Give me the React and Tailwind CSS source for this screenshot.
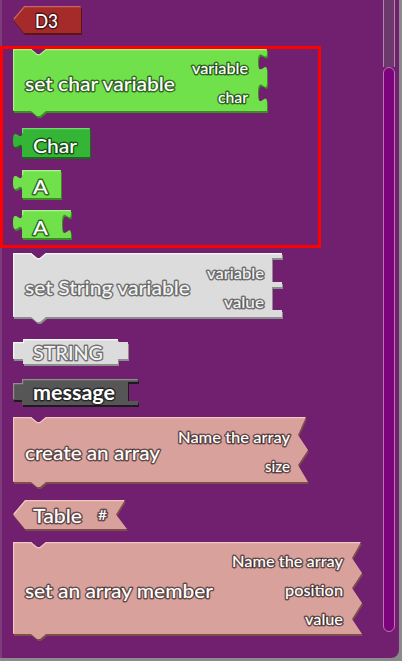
import React from 'react';

const FONT = "Lato, 'Open Sans', sans-serif";

const COLORS = {
  red: { fill: '#a52b2b', dark: '#5c1414', light: '#c86565' },
  green: { fill: '#70e14b', dark: '#3d8a27', light: '#a9f28f' },
  char: { fill: '#35b535', dark: '#1b691b', light: '#72d872' },
  gray: { fill: '#dcdcdc', dark: '#8c8c8c', light: '#f6f6f6' },
  dark: { fill: '#565656', dark: '#1c1c1c', light: '#8e8e8e' },
  pink: { fill: '#d9a19c', dark: '#7c4d49', light: '#f0c8c4' },
};

function Block({ w, h, d, hl, color, className = '', children }) {
  const c = COLORS[color];
  return (
    <svg width={w} height={h} className={`block overflow-visible ${className}`}>
      <path d={d} fill={c.dark} transform="translate(1,2)" />
      <path d={d} fill={c.fill} />
      {hl && <path d={hl} fill="none" stroke={c.light} strokeWidth="1.2" />}
      {children}
    </svg>
  );
}

function Label({ x, y, len, size = 20, end, gray, bold, children }) {
  return (
    <text
      x={x}
      y={y}
      fontSize={size}
      fontFamily={FONT}
      fontWeight={bold ? 700 : 500}
      textAnchor={end ? 'end' : 'start'}
      textLength={len}
      lengthAdjust="spacingAndGlyphs"
      fill={gray ? '#f4f4f4' : '#ffffff'}
      stroke={gray ? '#4e4e4e' : '#000000'}
      strokeOpacity={gray ? 0.75 : 0.55}
      strokeWidth="2.8"
      strokeLinejoin="round"
      paintOrder="stroke"
    >
      {children}
    </text>
  );
}

// puzzle socket on right edge, going down
const sock = (hgt) => `c0,${hgt * 0.6} -9,-${hgt * 0.45} -9,${hgt / 2} s9,-${hgt * 0.15} 9,${hgt / 2}`;
// output tab on left edge, going up
const tabUp = 'c0,-10 -9,8 -9,-7.5 s9,2.5 9,-7.5';

export default function App() {
  return (
    <div className="w-[402px] h-[661px] bg-[#8b8b8b] overflow-hidden">
      <div className="flex w-[399px] h-[658px] bg-[#71206f] rounded-br-[8px] shadow-[inset_2px_0_0_#7e3c7c] overflow-hidden">
        {/* Blocks */}
        <div className="w-[383px] flex flex-col items-start">
          <Block
            w={70}
            h={30}
            color="red"
            className="ml-[13px] mt-[6px]"
            d="M0,13.5 L11,0 H68 V27 H11 Z"
            hl="M1,13 L11.5,0.6 H67.5"
          >
            <Label x={22} y={22} len={23} size={19}>D3</Label>
          </Block>

          {/* highlighted group */}
          <div className="mt-[10px] w-[321px] border-[3px] border-[#ff0000] pl-[10px] pb-[4px]">
            <Block
              w={256}
              h={69}
              color="green"
              d={`M0,0 H18 l6,5 h3 l6,-5 H254 V4 ${sock(18)} V34 ${sock(20)} V62 H33 l-6,5 h-3 l-6,-5 H0 Z`}
              hl="M0.6,61 V0.6 H18 l6,5 h3 l6,-5 H253"
            >
              <Label x={12} y={42} len={150}>set char variable</Label>
              <Label x={235} y={25} len={56} size={15} end>variable</Label>
              <Label x={235} y={54} len={30} size={15} end>char</Label>
            </Block>

            <Block
              w={80}
              h={32}
              color="char"
              className="mt-[10px]"
              d={`M9,0 H77 V29 H9 V20 ${tabUp} Z`}
              hl="M9.6,5 V0.6 H76.5"
            >
              <Label x={20} y={25} len={44}>Char</Label>
            </Block>

            <Block
              w={50}
              h={31}
              color="green"
              className="mt-[10px]"
              d={`M9,0 H48 V28 H9 V20 ${tabUp} Z`}
              hl="M9.6,5 V0.6 H47.5"
            >
              <Label x={20} y={24} len={15}>A</Label>
            </Block>

            <Block
              w={60}
              h={31}
              color="green"
              className="mt-[9px]"
              d={`M9,0 H58 V3 ${sock(22)} V28 H9 V20 ${tabUp} Z`}
              hl="M9.6,5 V0.6 H57.5"
            >
              <Label x={20} y={25} len={15}>A</Label>
            </Block>
          </div>

          <Block
            w={270}
            h={71}
            color="gray"
            className="ml-[13px] mt-[5px]"
            d="M0,0 H18 l6,5 h3 l6,-5 H269 V5 H259 V29 H269 V34 H259 V57 H269 V64 H33 l-6,5 h-3 l-6,-5 H0 Z"
            hl="M0.6,63 V0.6 H18 l6,5 h3 l6,-5 H268.5"
          >
            <Label x={12} y={42} len={165} gray>set String variable</Label>
            <Label x={251} y={26} len={57} size={15} end gray>variable</Label>
            <Label x={251} y={55} len={40} size={15} end gray>value</Label>
          </Block>

          <Block
            w={117}
            h={28}
            color="gray"
            className="ml-[13px] mt-[15px]"
            d="M10,0 H105 V3 H115 V20 H105 V25 H10 V20 H0 V3 H10 Z"
            hl="M0.6,19 V3.6 H10.6 V0.6 H104.5"
          >
            <Label x={20} y={21} len={70} gray>STRING</Label>
          </Block>

          <Block
            w={127}
            h={29}
            color="dark"
            className="ml-[13px] mt-[12px]"
            d="M9,0 H125 V3 H115 V22 H125 V26 H9 V21 H0 V4 H9 Z"
            hl="M0.6,20 V4.6 H9.6 V0.6 H124.5"
          >
            <Label x={20} y={21} len={82} bold>message</Label>
          </Block>

          <Block
            w={296}
            h={72}
            color="pink"
            className="ml-[13px] mt-[9px]"
            d="M0,0 H18 l6,5 h3 l6,-5 H293 L285,18 L295,33 L285,48 L295,65 H33 l-6,5 h-3 l-6,-5 H0 Z"
            hl="M0.6,64 V0.6 H18 l6,5 h3 l6,-5 H292"
          >
            <Label x={12} y={43} len={135}>create an array</Label>
            <Label x={277} y={26} len={112} size={15} end>Name the array</Label>
            <Label x={277} y={55} len={25} size={15} end>size</Label>
          </Block>

          <Block
            w={116}
            h={32}
            color="pink"
            className="ml-[13px] mt-[11px]"
            d="M0,14.5 L12,0 H112 L103,14.5 L114,29 H12 Z"
            hl="M1,14 L12.5,0.6 H111"
          >
            <Label x={20} y={23} len={49}>Table</Label>
            <Label x={85} y={20} len={9} size={13}>#</Label>
          </Block>

          <Block
            w={350}
            h={99}
            color="pink"
            className="ml-[13px] mt-[10px]"
            d="M0,0 H18 l6,5 h3 l6,-5 H348 L339,16 L349,31 L339,46 L349,61 L339,77 L349,92 H33 l-6,5 h-3 l-6,-5 H0 Z"
            hl="M0.6,91 V0.6 H18 l6,5 h3 l6,-5 H347"
          >
            <Label x={12} y={56} len={188}>set an array member</Label>
            <Label x={330} y={25} len={111} size={15} end>Name the array</Label>
            <Label x={330} y={54} len={58} size={15} end>position</Label>
            <Label x={330} y={83} len={38} size={15} end>value</Label>
          </Block>
        </div>

        {/* Scrollbar */}
        <div className="w-[12px] h-[632px] flex flex-col">
          <div className="h-[67px] bg-[#6c3a6a] border-x border-[#a98aa8]" />
          <div className="flex-1 bg-[#7b047b] border border-[#bd72bd] rounded-[6px]" />
        </div>
      </div>
    </div>
  );
}
